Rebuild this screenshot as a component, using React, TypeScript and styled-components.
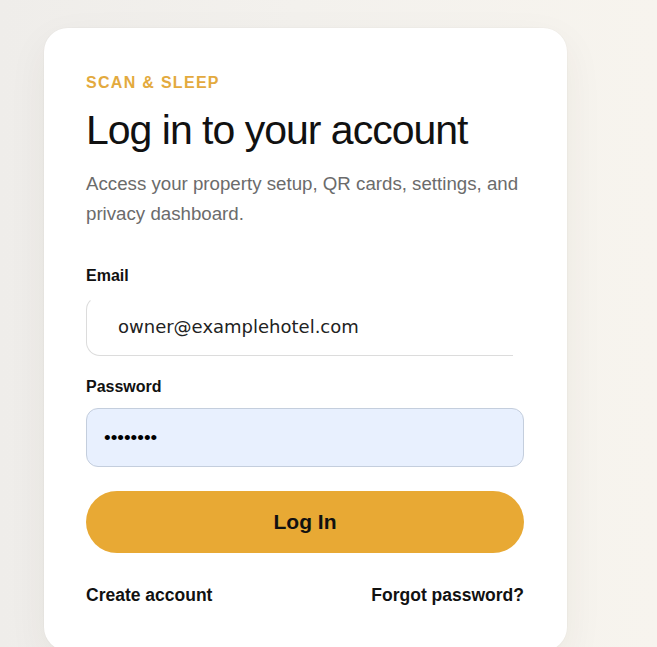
import React, { useState } from 'react';
import styled, { createGlobalStyle } from 'styled-components';

const GlobalStyle = createGlobalStyle`
  html, body {
    margin: 0;
    padding: 0;
  }
  body {
    font-family: "Liberation Sans", Arial, sans-serif;
    background: linear-gradient(90deg, #efedea 0%, #f3f1ed 45%, #f7f4ee 100%);
    min-height: 100vh;
    overflow: hidden;
  }
`;

const Page = styled.main`
  min-height: 100vh;
  padding: 28px 0 0 44px;
  box-sizing: border-box;
`;

const Card = styled.section`
  width: 523px;
  box-sizing: border-box;
  padding: 45px 43px 45px 42px;
  background: #ffffff;
  border-radius: 24px;
  box-shadow: 0 0 0 1px rgba(0, 0, 0, 0.015), 0 14px 40px rgba(70, 50, 20, 0.06);
`;

const Eyebrow = styled.div`
  font-size: 16px;
  line-height: 20px;
  font-weight: 700;
  letter-spacing: 1.3px;
  color: #e3aa3e;
`;

const Title = styled.h1`
  margin: 12px 0 0;
  font-size: 41px;
  line-height: 50px;
  font-weight: 400;
  letter-spacing: -1px;
  color: #111111;
`;

const Subtitle = styled.p`
  margin: 14px 0 0;
  font-size: 18.7px;
  line-height: 30px;
  color: #6b6b6b;
`;

const Form = styled.form`
  display: flex;
  flex-direction: column;
  margin-top: 37px;
`;

const Label = styled.label<{ $gap: number }>`
  font-size: 16px;
  line-height: 20px;
  font-weight: 700;
  color: #111111;
  margin-top: ${(p) => p.$gap}px;
`;

const EmailInput = styled.input`
  margin-top: 10px;
  width: 427px;
  height: 60px;
  box-sizing: border-box;
  padding: 0 0 0 31px;
  font-family: "DejaVu Sans", sans-serif;
  font-size: 18px;
  color: #222222;
  background: #ffffff;
  border: 1px solid #dcdcdc;
  border-top-color: transparent;
  border-right: none;
  border-radius: 14px 0 0 14px;
  outline: none;
`;

const PasswordInput = styled.input`
  margin-top: 11px;
  width: 100%;
  height: 59px;
  box-sizing: border-box;
  padding: 0 17px;
  font-family: "Liberation Sans", Arial, sans-serif;
  font-size: 19px;
  color: #000000;
  background: #e8f0fe;
  border: 1px solid #c4cedd;
  border-radius: 12px;
  outline: none;
`;

const SubmitButton = styled.button`
  margin-top: 24px;
  height: 62px;
  width: 100%;
  border: none;
  border-radius: 31px;
  background: #e8a934;
  color: #111111;
  font-family: "Liberation Sans", Arial, sans-serif;
  font-size: 21px;
  font-weight: 700;
  cursor: pointer;
`;

const Links = styled.div`
  display: flex;
  justify-content: space-between;
  margin-top: 31px;
`;

const TextLink = styled.a`
  font-size: 17.5px;
  line-height: 22px;
  font-weight: 700;
  color: #111111;
  text-decoration: none;
  cursor: pointer;
`;

export default function App() {
  const [email, setEmail] = useState('owner@examplehotel.com');
  const [password, setPassword] = useState('password');

  return (
    <>
      <GlobalStyle />
      <Page>
        <Card>
          <Eyebrow>SCAN &amp; SLEEP</Eyebrow>
          <Title>Log in to your account</Title>
          <Subtitle>
            Access your property setup, QR cards, settings, and privacy dashboard.
          </Subtitle>
          <Form onSubmit={(e) => e.preventDefault()}>
            <Label $gap={0} htmlFor="email">
              Email
            </Label>
            <EmailInput
              id="email"
              type="email"
              value={email}
              onChange={(e) => setEmail(e.target.value)}
            />
            <Label $gap={21} htmlFor="password">
              Password
            </Label>
            <PasswordInput
              id="password"
              type="password"
              value={password}
              onChange={(e) => setPassword(e.target.value)}
            />
            <SubmitButton type="submit">Log In</SubmitButton>
          </Form>
          <Links>
            <TextLink>Create account</TextLink>
            <TextLink>Forgot password?</TextLink>
          </Links>
        </Card>
      </Page>
    </>
  );
}
